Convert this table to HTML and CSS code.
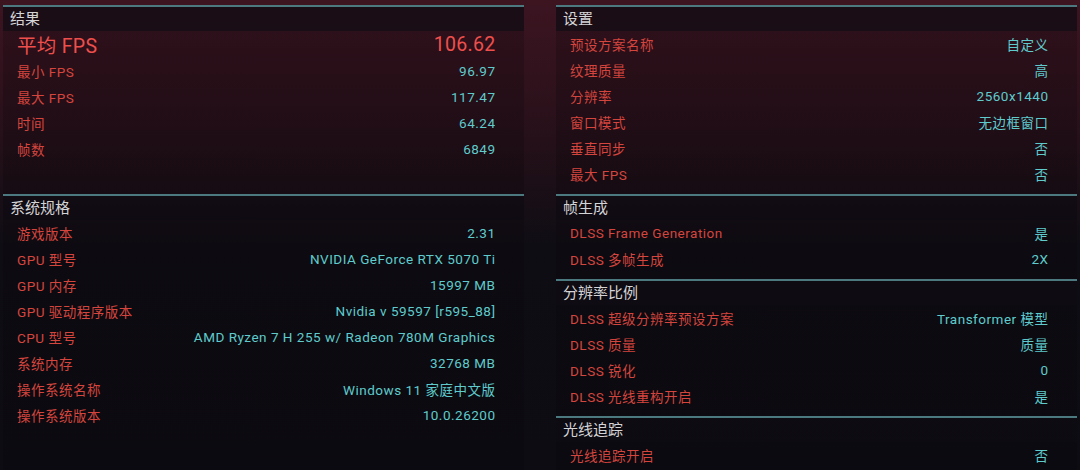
FILE: index.html
```html
<!DOCTYPE html>
<html lang="zh-CN">
<head>
<meta charset="utf-8">
<title>基准测试结果</title>
<link rel="stylesheet" href="styles.css">
</head>
<body>
<main class="board">
  <section class="panel">
    <h2 class="panel-title">结果</h2>
    <div class="row row-main"><span class="label">平均 FPS</span><span class="value">106.62</span></div>
    <div class="row"><span class="label">最小 FPS</span><span class="value">96.97</span></div>
    <div class="row"><span class="label">最大 FPS</span><span class="value">117.47</span></div>
    <div class="row"><span class="label">时间</span><span class="value">64.24</span></div>
    <div class="row"><span class="label">帧数</span><span class="value">6849</span></div>
  </section>

  <section class="panel">
    <h2 class="panel-title">设置</h2>
    <div class="row"><span class="label">预设方案名称</span><span class="value">自定义</span></div>
    <div class="row"><span class="label">纹理质量</span><span class="value">高</span></div>
    <div class="row"><span class="label">分辨率</span><span class="value">2560x1440</span></div>
    <div class="row"><span class="label">窗口模式</span><span class="value">无边框窗口</span></div>
    <div class="row"><span class="label">垂直同步</span><span class="value">否</span></div>
    <div class="row"><span class="label">最大 FPS</span><span class="value">否</span></div>
  </section>

  <section class="panel">
    <h2 class="panel-title">系统规格</h2>
    <div class="row"><span class="label">游戏版本</span><span class="value">2.31</span></div>
    <div class="row"><span class="label">GPU 型号</span><span class="value">NVIDIA GeForce RTX 5070 Ti</span></div>
    <div class="row"><span class="label">GPU 内存</span><span class="value">15997 MB</span></div>
    <div class="row"><span class="label">GPU 驱动程序版本</span><span class="value">Nvidia v 59597 [r595_88]</span></div>
    <div class="row"><span class="label">CPU 型号</span><span class="value">AMD Ryzen 7 H 255 w/ Radeon 780M Graphics</span></div>
    <div class="row"><span class="label">系统内存</span><span class="value">32768 MB</span></div>
    <div class="row"><span class="label">操作系统名称</span><span class="value">Windows 11 家庭中文版</span></div>
    <div class="row"><span class="label">操作系统版本</span><span class="value">10.0.26200</span></div>
  </section>

  <div class="stack">
    <section class="panel">
      <h2 class="panel-title">帧生成</h2>
      <div class="row"><span class="label">DLSS Frame Generation</span><span class="value">是</span></div>
      <div class="row"><span class="label">DLSS 多帧生成</span><span class="value">2X</span></div>
    </section>
    <section class="panel">
      <h2 class="panel-title">分辨率比例</h2>
      <div class="row"><span class="label">DLSS 超级分辨率预设方案</span><span class="value">Transformer 模型</span></div>
      <div class="row"><span class="label">DLSS 质量</span><span class="value">质量</span></div>
      <div class="row"><span class="label">DLSS 锐化</span><span class="value">0</span></div>
      <div class="row"><span class="label">DLSS 光线重构开启</span><span class="value">是</span></div>
    </section>
    <section class="panel panel-fill">
      <h2 class="panel-title">光线追踪</h2>
      <div class="row"><span class="label">光线追踪开启</span><span class="value">否</span></div>
    </section>
  </div>
</main>
</body>
</html>
```

FILE: styles.css
```css
html, body {
  margin: 0;
  padding: 0;
  height: 470px;
  overflow: hidden;
}

body {
  background: linear-gradient(180deg, #3c1521 0%, #2c111b 22%, #1d0f17 38%, #0f0d14 52%, #0c0c12 100%);
  font-family: Roboto, "Noto Sans CJK SC", sans-serif;
  -webkit-font-smoothing: antialiased;
}

.board {
  display: grid;
  grid-template-columns: 521px 521px;
  grid-template-rows: auto 1fr;
  column-gap: 32px;
  padding: 5px 3px 0;
  height: 465px;
  box-sizing: border-box;
}

.stack {
  display: flex;
  flex-direction: column;
}

.panel {
  border-top: 2px solid #4c7880;
  background: rgba(8, 4, 10, 0.22);
  padding-bottom: 7px;
}

.panel-fill {
  flex: 1;
}

.panel-title {
  margin: 0;
  height: 24px;
  line-height: 24px;
  padding-left: 7px;
  font-size: 15px;
  font-weight: 400;
  color: #d4d4d6;
  background: rgba(16, 13, 20, 0.65);
}

.row {
  display: flex;
  justify-content: space-between;
  align-items: center;
  height: 26px;
  padding: 0 29px 0 14px;
}

.label,
.value {
  font-size: 13.5px;
  letter-spacing: 0.5px;
}

.label {
  color: #d4453e;
}

.value {
  color: #5fcbcd;
  margin-right: -0.5px;
}

.row-main {
  height: 27px;
}

.row-main .label,
.row-main .value {
  font-size: 19.5px;
  letter-spacing: 0.3px;
  color: #ee4f4c;
}
```
